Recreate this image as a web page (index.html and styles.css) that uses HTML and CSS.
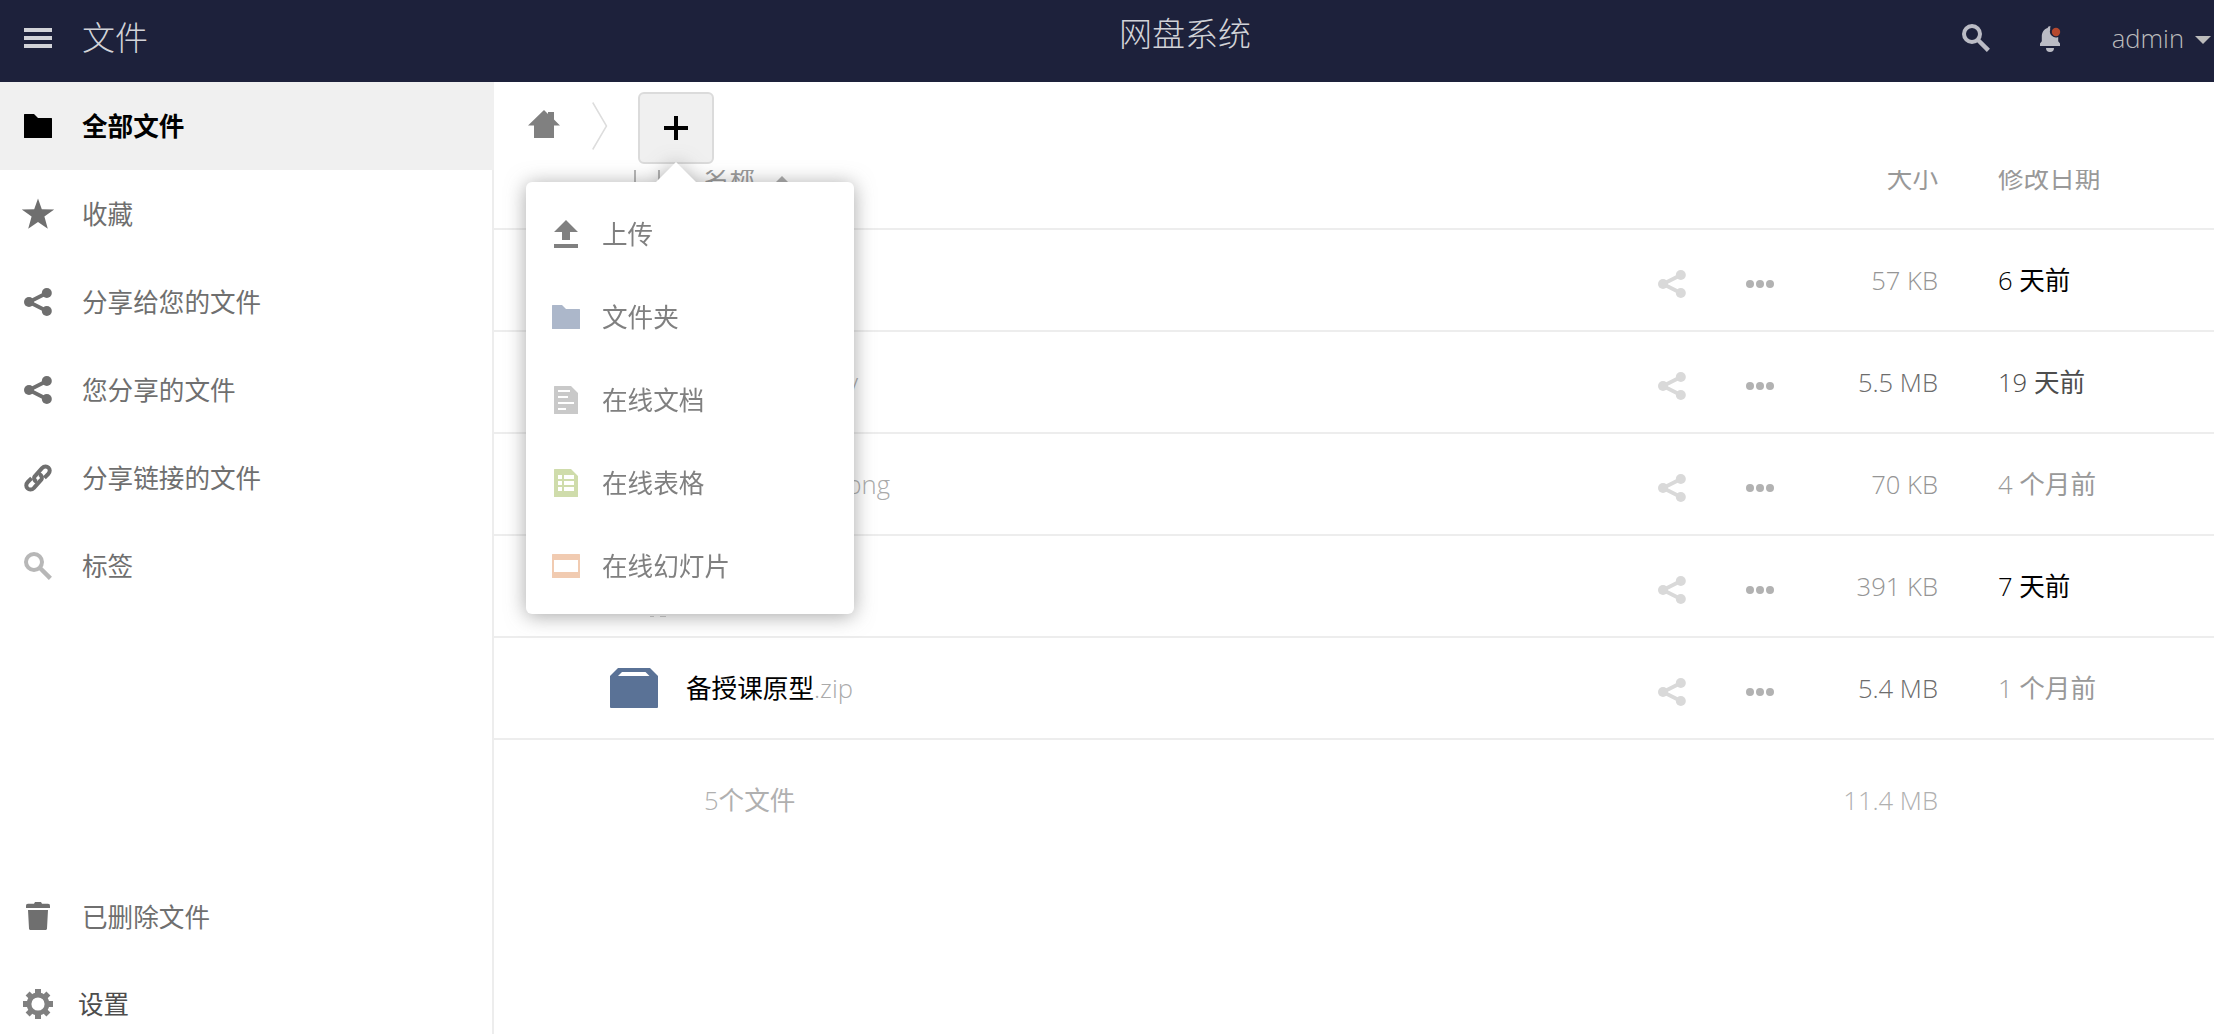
FILE: index.html
```html
<!DOCTYPE html>
<html lang="zh-CN">
<head>
<meta charset="utf-8">
<title>文件 - 网盘系统</title>
<link rel="stylesheet" href="styles.css">
</head>
<body>
<svg class="defs" width="0" height="0">
  <symbol id="share" viewBox="0 0 16 16"><circle cx="3.5" cy="8" r="2.5"/><circle cx="12.4" cy="3.5" r="2.5"/><circle cx="12.4" cy="12.5" r="2.5"/><path d="M12.4 3.5 3.5 8l8.9 4.5" fill="none" stroke="currentColor" stroke-width="1.9"/></symbol>
  <symbol id="folder" viewBox="0 0 16 16"><path d="M1.3 2A.3.3 0 0 0 1 2.3v11.4c0 .17.13.3.3.3h13.4a.3.3 0 0 0 .3-.3V4.3a.3.3 0 0 0-.3-.3H8L6 2z"/></symbol>
  <symbol id="search" viewBox="0 0 16 16"><path fill="none" stroke="currentColor" stroke-width="2" d="M6 2a4 4 0 1 0 0 8 4 4 0 1 0 0-8z"/><path fill="none" stroke="currentColor" stroke-width="2.2" d="m9 9 5.2 5.2"/></symbol>
  <symbol id="dots" viewBox="0 0 16 16"><circle cx="3" cy="8" r="2"/><circle cx="8" cy="8" r="2"/><circle cx="13" cy="8" r="2"/></symbol>
</svg>

<header class="topbar">
  <div class="topbar-left">
    <svg class="icon" viewBox="0 0 16 16"><path d="M1 3h14v2H1zM1 7h14v2H1zM1 11h14v2H1z"/></svg>
    <span class="app-name">文件</span>
  </div>
  <div class="brand">网盘系统</div>
  <div class="topbar-right">
    <svg class="icon"><use href="#search"/></svg>
    <svg class="icon bell" viewBox="0 0 16 16"><path d="M7.6 2.1C7 2.3 7 2.7 6.800 3 4.800 3.600 3.900 5.300 3.900 7.200v2.400L3 10.700V12h10v-1.300l-.9-1.100V7.500A3 3 0 0 1 8.100 3.800a3 3 0 0 1 .2-1.700zM6 13a2 2 0 0 0 4 0z"/><circle class="badge" cx="11" cy="5" r="2.100"/></svg>
    <span class="user">admin</span>
    <i class="caret"></i>
  </div>
</header>

<div class="layout">
  <nav class="sidebar">
    <a class="nav active"><svg class="icon"><use href="#folder"/></svg><span>全部文件</span></a>
    <a class="nav"><svg class="icon" viewBox="0 0 16 16"><path d="M8 .3l1.900 5.300 6.200.2-4.900 3.500 1.700 6.100L8 12l-4.900 3.400 1.700-6.100L-.1 5.800l6.200-.2z"/></svg><span>收藏</span></a>
    <a class="nav"><svg class="icon"><use href="#share"/></svg><span>分享给您的文件</span></a>
    <a class="nav"><svg class="icon"><use href="#share"/></svg><span>您分享的文件</span></a>
    <a class="nav"><svg class="icon" viewBox="0 0 16 16"><g fill="none" stroke="currentColor" stroke-width="2"><path d="M7.500 9.900a1.800 1.800 0 0 1-.7-3.200L10 3.100c2.300-2.300 5.300.6 3.100 2.900L11.200 7.900"/><path d="M8.500 6.100a1.800 1.800 0 0 1 .7 3.200L6 12.900c-2.300 2.300-5.300-.6-3.100-2.900L4.800 8.100"/></g></svg><span>分享链接的文件</span></a>
    <a class="nav tags"><svg class="icon"><use href="#search"/></svg><span>标签</span></a>
    <div class="nav-bottom">
      <a class="nav trash"><svg class="icon" viewBox="0 0 16 16"><path d="M6.500 1 6 1.900H3A1 1 0 0 0 2 3v1h12V3a1 1 0 0 0-1-1.100h-3L9.500 1zM3 5l.5 9.200c0 .4.300.8.800.8h7.400c.5 0 .8-.4.800-.8L13 5z"/></svg><span>已删除文件</span></a>
      <a class="nav settings"><svg class="icon" viewBox="0 0 16 16"><g fill="none" stroke="currentColor"><circle cx="8" cy="8" r="4.500" stroke-width="2.400"/><path stroke-width="3" d="M8 .5v2.200M8 13.300v2.200M.5 8h2.200M13.300 8h2.200"/><path stroke-width="2.800" d="m2.800 2.800 1.500 1.500M11.700 11.700l1.500 1.500M2.800 13.200l1.500-1.500M11.700 4.300l1.500-1.500"/></g></svg><span>设置</span></a>
    </div>
  </nav>

  <main class="content">
    <div class="controls">
      <svg class="icon home" viewBox="0 0 16 16"><path d="M8 1 0 8.700h3V15h10V8.700h3l-3-2.900V2h-3v1z"/></svg>
      <svg class="sep" viewBox="0 0 16 48"><path d="M.7.5 14.500 24 .7 47.500"/></svg>
      <div class="add">
        <button class="add-button" aria-label="+"><svg viewBox="0 0 24 24"><path d="M10 0h4v10h10v4H14v10h-4V14H0v-4h10z"/></svg></button>
        <div class="menu">
          <a class="menu-item"><svg class="icon" viewBox="0 0 16 16"><path d="M8 1l6 6h-4v4H6V7H2zM2 13h12v2H2z"/></svg><span>上传</span></a>
          <a class="menu-item"><svg class="icon c-folder"><use href="#folder"/></svg><span>文件夹</span></a>
          <a class="menu-item"><svg class="icon c-doc" viewBox="0 0 16 16"><path fill-rule="evenodd" d="M2.300 1h8.200L14 4.500v10.200a.3.300 0 0 1-.3.300H2.300a.3.300 0 0 1-.3-.3V1.300A.3.300 0 0 1 2.300 1zM4 3v1h6V3zM4 6v1h5V6zM4 9v1h8V9zM4 12v1h4v-1z"/></svg><span>在线文档</span></a>
          <a class="menu-item"><svg class="icon c-sheet" viewBox="0 0 16 16"><path fill-rule="evenodd" d="M2.300 1h8.200L14 4.500v10.200a.3.300 0 0 1-.3.300H2.300a.3.300 0 0 1-.3-.3V1.300A.3.300 0 0 1 2.300 1zM4 4v2h2V4zM7 4v2h5V4zM4 7v2h2V7zM7 7v2h5V7zM4 10v2h2v-2zM7 10v2h5v-2z"/></svg><span>在线表格</span></a>
          <a class="menu-item"><svg class="icon c-slide" viewBox="0 0 16 16"><path fill-rule="evenodd" d="M1.300 2h13.400a.3.300 0 0 1 .3.300v11.400a.3.300 0 0 1-.3.300H1.300a.3.300 0 0 1-.3-.3V2.300a.3.300 0 0 1 .3-.3zM2 5v6h12V5z"/></svg><span>在线幻灯片</span></a>
        </div>
      </div>
    </div>

    <div class="files">
      <div class="row head">
        <i class="check"></i>
        <span class="name">名称<i class="sort"></i></span>
        <span class="size">大小</span><span class="date">修改日期</span>
      </div>
      <div class="row">
        <span class="thumb"></span><span class="name"></span>
        <svg class="icon act-share"><use href="#share"/></svg><svg class="icon act-more"><use href="#dots"/></svg>
        <span class="size kb">57 KB</span><span class="date new">6 <b>天前</b></span>
      </div>
      <div class="row">
        <span class="thumb"></span><span class="name"><span class="covered video"><b class="ext">.mov</b></span></span>
        <svg class="icon act-share"><use href="#share"/></svg><svg class="icon act-more"><use href="#dots"/></svg>
        <span class="size">5.5 MB</span><span class="date mid">19 <b>天前</b></span>
      </div>
      <div class="row">
        <span class="thumb"></span><span class="name"><span class="covered image"><b class="ext">.png</b></span></span>
        <svg class="icon act-share"><use href="#share"/></svg><svg class="icon act-more"><use href="#dots"/></svg>
        <span class="size kb">70 KB</span><span class="date">4 <b>个月前</b></span>
      </div>
      <div class="row">
        <svg class="thumb" viewBox="0 0 64 64"><path class="marks" d="M48 62h4v1h-4zM58 62h6v1h-6z"/></svg><span class="name"></span>
        <svg class="icon act-share"><use href="#share"/></svg><svg class="icon act-more"><use href="#dots"/></svg>
        <span class="size kb">391 KB</span><span class="date new">7 <b>天前</b></span>
      </div>
      <div class="row">
        <svg class="thumb zip" viewBox="0 0 64 64"><path fill-rule="evenodd" d="M16 12h32l8 8v31a1 1 0 0 1-1 1H9a1 1 0 0 1-1-1V20zM20 16l-4 4h31.500l-4-4z"/></svg><span class="name">备授课原型<b class="ext">.zip</b></span>
        <svg class="icon act-share"><use href="#share"/></svg><svg class="icon act-more"><use href="#dots"/></svg>
        <span class="size">5.4 MB</span><span class="date">1 <b>个月前</b></span>
      </div>
      <div class="row summary">
        <span class="name">5<b>个文件</b></span><span class="size">11.4 MB</span><span class="date"></span>
      </div>
    </div>
  </main>
</div>
</body>
</html>
```
FILE: styles.css
```css
* { box-sizing: border-box; }
body {
  margin: 0;
  height: 1034px;
  overflow: hidden;
  background: #fff;
  color: #000;
  font: 300 25.6px/40px "Open Sans", "Noto Sans CJK SC", sans-serif;
}
.defs { position: absolute; }
.icon { width: 32px; height: 32px; flex: none; fill: currentColor; overflow: visible; }

.topbar {
  height: 82px;
  background: #1d213b;
  color: #d2d3d8;
  display: grid;
  grid-template-columns: 1119px auto 1fr;
}
.topbar-left { display: flex; align-items: center; padding: 0 0 6px 22px; }
.app-name { font-size: 33px; margin-left: 28px; }
.brand { font-size: 33px; line-height: 68px; }
.topbar-right { display: flex; align-items: center; justify-content: flex-end; padding: 0 3px 6px 0; color: #bbbcc5; }
.bell { margin: 0 46px 0 42px; }
.badge { fill: #b5482e; }
.user { color: #bbb; padding-top: 2px; }
.caret { border: 8px solid transparent; border-top-color: #bbb; border-bottom: 0; margin: 4px 0 0 11px; }

.layout { display: flex; height: 952px; }
.sidebar { width: 494px; flex: none; border-right: 2px solid #ededed; display: flex; flex-direction: column; }
.nav {
  height: 88px;
  flex: none;
  display: flex;
  align-items: center;
  gap: 28px;
  padding-left: 22px;
  color: #6f6f6f;
  font-weight: 400;
}
.nav span { padding-top: 2px; }
.active { background: #f0f0f0; color: #000; font-weight: 600; margin-right: -2px; }
.tags .icon { color: #b7b7b7; }
.nav-bottom { margin-top: auto; margin-bottom: -14px; }
.trash .icon { margin-bottom: 4px; }
.trash span { padding-top: 0; padding-bottom: 1px; }
.settings { color: #4d4d4d; gap: 24px; height: 86px; }
.settings .icon { color: #808080; margin-bottom: 3px; }
.settings span { padding-top: 0; }

.content { flex: 1; min-width: 0; }
.controls { height: 88px; display: flex; padding-left: 34px; }
.home { margin-top: 26px; color: #808080; }
.sep { width: 16px; height: 48px; margin: 20px 30px 0 32px; fill: none; stroke: #ddd; stroke-width: 1.5; }
.add { position: relative; }
.add-button {
  width: 76px;
  height: 72px;
  margin-top: 10px;
  padding: 0;
  display: flex;
  align-items: center;
  justify-content: center;
  background: #f0f0f0;
  border: 2px solid #dbdbdb;
  border-radius: 6px;
}
.add-button svg { width: 24px; height: 24px; }

.menu {
  position: absolute;
  z-index: 2;
  left: -112px;
  top: 100px;
  width: 328px;
  height: 432px;
  padding-top: 10px;
  background: #fff;
  border-radius: 6px;
  filter: drop-shadow(0 2px 10px rgba(77, 77, 77, .5));
}
.menu::before {
  content: "";
  position: absolute;
  left: 130px;
  top: -20px;
  border: 20px solid transparent;
  border-top: 0;
  border-bottom-color: #fff;
}
.menu-item {
  height: 83px;
  display: flex;
  align-items: center;
  gap: 20px;
  padding-left: 24px;
  color: #808080;
  font-weight: 400;
}
.menu-item span { padding-top: 2px; }
.c-folder { color: #acb7ca; }
.c-doc { color: #c9c9c9; }
.c-sheet { color: #cfdcab; }
.c-slide { color: #f1cbb1; }

.files { overflow: hidden; }
.row { height: 102px; border-bottom: 2px solid #ededed; display: flex; align-items: center; padding-left: 108px; }
.thumb { width: 64px; height: 64px; flex: none; }
.zip { fill: #5a7296; }
.marks { fill: #ccc; }
.name { flex: 1; margin-left: 20px; font-weight: 400; display: flex; align-items: center; }
.name, .size, .date { padding-top: 2px; }
.name b, .date b { font-weight: 400; }
.name .ext { font-weight: 300; color: #aaa; }
.covered { text-align: right; }
.video { width: 172px; }
.image { width: 204px; }
.act-share { color: #d9d9d9; margin: 8px 56px 0 0; }
.act-more { color: #b2b2b2; margin-top: 8px; }
.size { width: 162px; text-align: right; color: #6c6c6c; }
.kb { color: #959595; }
.date { width: 216px; margin-left: 60px; color: #999; }
.new { color: #000; }
.mid { color: #4d4d4d; }
.head { height: 60px; color: #999; padding: 0 0 40px 140px; }
.head .name, .head .size, .head .date { padding-top: 0; }
.head .size, .head .date { color: #999; font-weight: 400; }
.check { width: 26px; height: 26px; border: 2px solid #b5b5b5; border-radius: 2px; }
.head .name { margin-left: 44px; }
.sort { border: 6px solid transparent; border-bottom-color: #aaa; border-top: 0; margin-left: 21px; }
.summary { height: 120px; border: 0; padding-left: 190px; }
.summary .name, .summary .size { color: #b0b0b0; font-weight: 300; }
```
